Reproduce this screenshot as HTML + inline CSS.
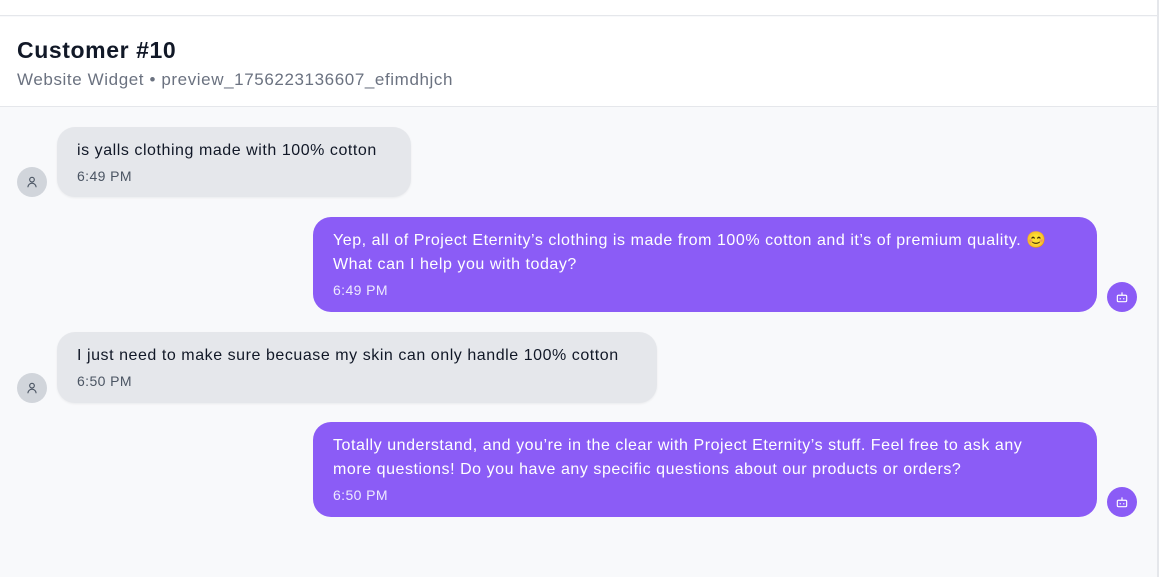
<!DOCTYPE html>
<html><head><meta charset="utf-8"><style>
*{margin:0;padding:0;box-sizing:border-box}
body{width:1159px;height:577px;overflow:hidden;background:#f8f9fb;font-family:"Liberation Sans",sans-serif;position:relative}
.top{position:absolute;left:0;top:0;width:1157px;height:16px;background:#fff;border-bottom:1px solid #e5e7eb}
.hdr{position:absolute;left:0;top:17px;width:1157px;height:90px;background:#fff;border-bottom:1px solid #e5e7eb}
.hdr h1{position:absolute;left:17px;top:20px;font-size:23px;font-weight:bold;color:#111827;letter-spacing:0.6px}
.hdr p{position:absolute;left:17px;top:53px;font-size:17px;color:#6b7280;letter-spacing:0.6px}
.rb{position:absolute;right:0;top:0;width:2px;height:577px;background:#e5e7eb}
.b{position:absolute;border-radius:18px;padding:12px 20px;font-size:16px;line-height:24px;letter-spacing:0.55px;white-space:nowrap}
.u{background:#e5e7eb;color:#111827;box-shadow:0 1px 2px rgba(0,0,0,.06)}
.a{background:#8b5cf6;color:#fff}
.t{font-size:14px;line-height:20px;margin-top:3px;letter-spacing:0.4px}
.u .t{color:#4b5563}.a .t{color:#ede9fe}
.av{position:absolute;width:30px;height:30px;border-radius:50%;display:flex;align-items:center;justify-content:center}
.ua{background:#d1d5db}.ba{background:#8b5cf6}
</style></head><body>
<div class="top"></div>
<div class="hdr"><h1>Customer #10</h1><p>Website Widget • preview_1756223136607_efimdhjch</p></div>
<div class="rb"></div>

<div class="av ua" style="left:17px;top:167px"><svg width="14" height="14" viewBox="0 0 24 24" fill="none" stroke="#4b5563" stroke-width="2"><circle cx="12" cy="8" r="4"/><path d="M5 21a7 7 0 0 1 14 0"/></svg></div>
<div class="b u" style="left:57px;top:127px;width:354px;height:70px">is yalls clothing made with 100% cotton<div class="t">6:49 PM</div></div>

<div class="b a" style="left:313px;top:217px;width:784px;height:95px">Yep, all of Project Eternity’s clothing is made from 100% cotton and it’s of premium quality. 😊<br>What can I help you with today?<div class="t">6:49 PM</div></div>
<div class="av ba" style="left:1107px;top:282px"><svg width="14" height="14" viewBox="0 0 24 24" fill="none" stroke="#fff" stroke-width="2"><rect x="4" y="9" width="16" height="11" rx="2"/><path d="M12 4v5M9 14v2M15 14v2"/></svg></div>

<div class="av ua" style="left:17px;top:373px"><svg width="14" height="14" viewBox="0 0 24 24" fill="none" stroke="#4b5563" stroke-width="2"><circle cx="12" cy="8" r="4"/><path d="M5 21a7 7 0 0 1 14 0"/></svg></div>
<div class="b u" style="left:57px;top:332px;width:600px;height:71px">I just need to make sure becuase my skin can only handle 100% cotton<div class="t">6:50 PM</div></div>

<div class="b a" style="left:313px;top:422px;width:784px;height:95px">Totally understand, and you’re in the clear with Project Eternity’s stuff. Feel free to ask any<br>more questions! Do you have any specific questions about our products or orders?<div class="t">6:50 PM</div></div>
<div class="av ba" style="left:1107px;top:487px"><svg width="14" height="14" viewBox="0 0 24 24" fill="none" stroke="#fff" stroke-width="2"><rect x="4" y="9" width="16" height="11" rx="2"/><path d="M12 4v5M9 14v2M15 14v2"/></svg></div>
</body></html>
